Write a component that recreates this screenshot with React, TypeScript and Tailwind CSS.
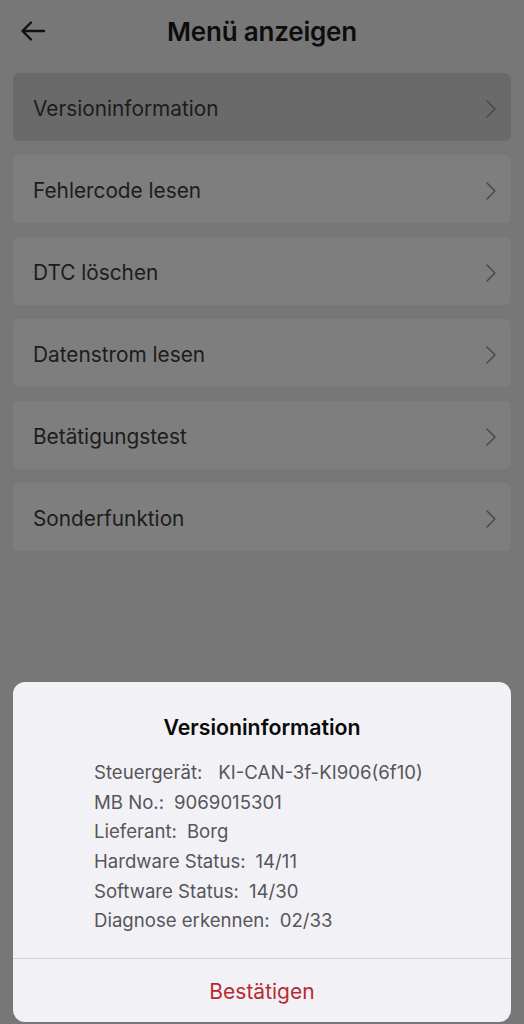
import React from 'react'

const items = [
    'Versioninformation',
    'Fehlercode lesen',
    'DTC löschen',
    'Datenstrom lesen',
    'Betätigungstest',
    'Sonderfunktion',
]

const infoRows = [
    ['Steuergerät:', 'KI-CAN-3f-KI906(6f10)', 'ml-[16px]'],
    ['MB No.:', '9069015301', 'ml-[10px]'],
    ['Lieferant:', 'Borg', 'ml-[10px]'],
    ['Hardware Status:', '14/11', 'ml-[10px]'],
    ['Software Status:', '14/30', 'ml-[10px]'],
    ['Diagnose erkennen:', '02/33', 'ml-[10px]'],
]

function Chevron() {
    return (
        <svg width="12" height="20" viewBox="0 0 12 20" fill="none">
            <path d="M2 2l8 8-8 8" stroke="#4a4a4a" strokeWidth="1.6" strokeLinecap="round" strokeLinejoin="round" />
        </svg>
    )
}

export default function App(): JSX.Element {
    return (
        <div className="w-[524px] h-[1024px] bg-[#777777] flex flex-col font-['Inter',sans-serif] overflow-hidden">
            {/* header */}
            <div className="h-[62px] flex items-center relative px-[20px]">
                <svg width="26" height="22" viewBox="0 0 26 22" fill="none">
                    <path d="M24 11H3M11 2.5L2.5 11l8.5 8.5" stroke="#111" strokeWidth="2.4" strokeLinecap="round" strokeLinejoin="round" />
                </svg>
                <div className="flex-1 text-center text-[26px] font-semibold text-[#0d0d0d] tracking-[-0.2px] mr-[26px]">
                    Menü anzeigen
                </div>
            </div>

            {/* menu */}
            <div className="flex flex-col gap-[14px] px-[13px] mt-[11px]">
                {items.map((label, i) => (
                    <div
                        key={label}
                        className={`h-[68px] rounded-[6px] flex items-center justify-between pl-[20px] pr-[14px] pt-[3px] ${i === 0 ? 'bg-[#6a6a6a]' : 'bg-[#7e7e7e]'}`}
                    >
                        <span className="text-[20.8px] text-[#1c1c1c]">{label}</span>
                        <Chevron />
                    </div>
                ))}
            </div>

            {/* dialog */}
            <div className="mt-auto mb-[2px] mx-[13px] bg-[#f2f2f6] rounded-[12px] flex flex-col h-[340px]">
                <div className="text-center text-[21.3px] font-semibold text-[#0a0a0a] mt-[30px]">
                    Versioninformation
                </div>
                <div className="flex flex-col pl-[81px] mt-[14px] text-[18.6px] text-[#56565c] leading-[29.7px]">
                    {infoRows.map(([k, v, gap]) => (
                        <div key={k} className="flex">
                            <span>{k}</span>
                            <span className={gap}>{v}</span>
                        </div>
                    ))}
                </div>
                <div className="mt-auto border-t border-[#d4d4d8] h-[64px] flex items-center justify-center pt-[3px]">
                    <span className="text-[21px] text-[#b82a33]">Bestätigen</span>
                </div>
            </div>
        </div>
    )
}
